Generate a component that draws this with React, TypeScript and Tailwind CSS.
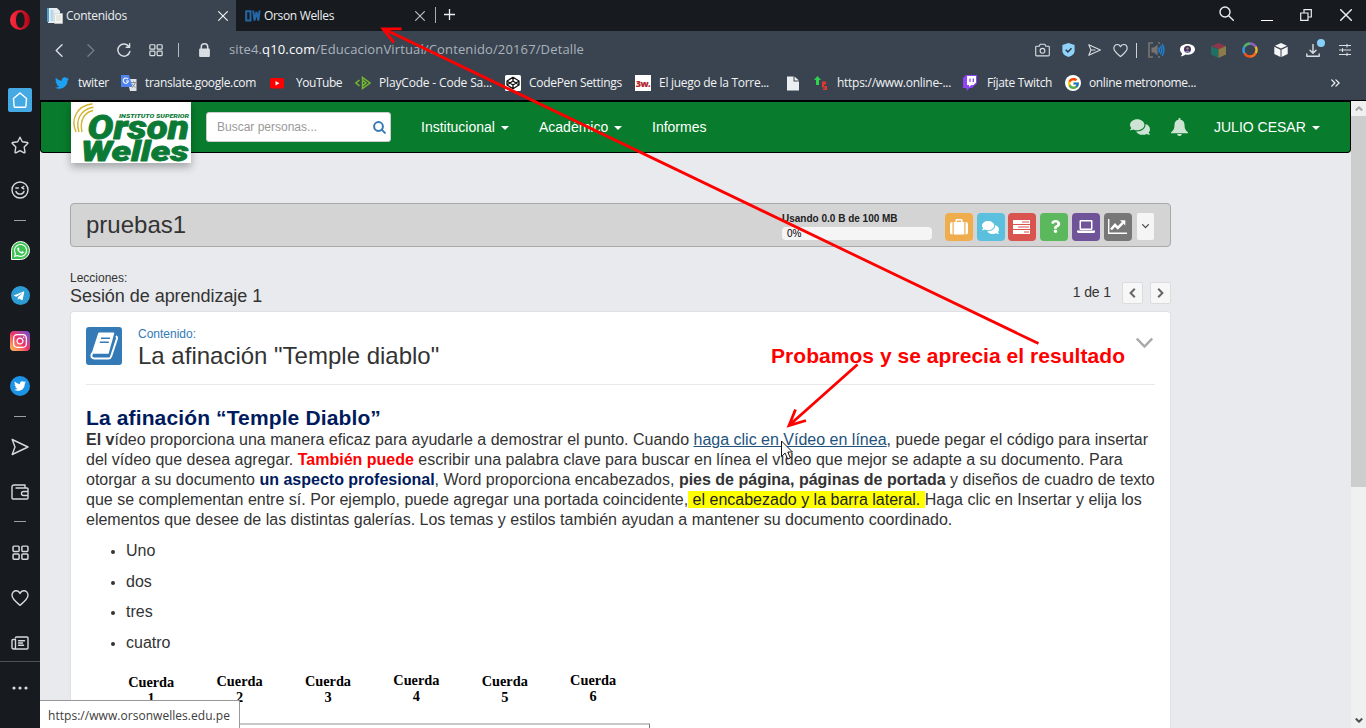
import type { ReactNode, SVGProps } from 'react';
import { FaComments, FaQuestion, FaTwitter, FaWhatsapp, FaInstagram, FaTelegramPlane } from 'react-icons/fa';
import { FcGoogle } from 'react-icons/fc';

const UI = "font-['Open_Sans','Noto_Sans',sans-serif]";

function Line(props: SVGProps<SVGSVGElement>) {
  return <svg fill="none" stroke="currentColor" strokeWidth={1.4} strokeLinecap="round" strokeLinejoin="round" {...props} />;
}

function Cell({ className, children }: { className: string; children?: ReactNode }) {
  return <div className={`flex shrink-0 items-center justify-center ${className}`}>{children}</div>;
}

const Dash = ({ className }: { className: string }) => (
  <Cell className={className}><span className="h-px w-3 bg-[#98a1a9]" /></Cell>
);

const SendIcon = ({ size }: { size: number }) => (
  <Line width={size} height={size} viewBox="0 0 18 18"><path d="M1.200 1.500 17 9 1.200 16.500 4 9Z" /></Line>
);
const HeartIcon = ({ size }: { size: number }) => (
  <Line width={size} height={size} viewBox="0 0 18 18"><path d="M9 16.300C5 13 1 10 1 6.300 1 3.600 2.900 1.800 5.100 1.800 6.900 1.800 8.200 2.800 9 4.400 9.800 2.800 11.100 1.800 12.900 1.800 15.100 1.800 17 3.600 17 6.300 17 10 13 13 9 16.300Z" /></Line>
);
const GridIcon = ({ size }: { size: number }) => (
  <Line width={size} height={size} viewBox="0 0 16 14"><rect x="1" y="1" width="5.700" height="5" rx=".8" /><rect x="9.300" y="1" width="5.700" height="5" rx=".8" /><rect x="1" y="8.300" width="5.700" height="5" rx=".8" /><rect x="9.300" y="8.300" width="5.700" height="5" rx=".8" /></Line>
);

function Sidebar() {
  return (
    <aside className="flex w-10 shrink-0 flex-col bg-[#171b1f] text-[#d5dade]">
      <Cell className="h-10">
        <svg width="20" height="20" viewBox="0 0 20 20">
          <defs><linearGradient id="op" x2="1"><stop offset="0" stopColor="#ff2b3f" /><stop offset="1" stopColor="#b00616" /></linearGradient></defs>
          <path fillRule="evenodd" fill="url(#op)" d="M10 0a10 10 0 1 0 0 20 10 10 0 0 0 0-20Zm.4 2.200c2.600 0 4.300 3.400 4.300 7.800s-1.700 7.800-4.300 7.800S6 14.400 6 10s1.800-7.800 4.400-7.800Z" />
        </svg>
      </Cell>
      <div className="h-[38px]" />
      <Cell className="h-11">
        <div className="flex size-6 items-center justify-center rounded-[2px] bg-[#45aae4] text-white">
          <Line width="16" height="16" viewBox="0 0 16 16"><path d="M1.500 6.500 8 1l6.500 5.500-.6 8a.8.8 0 0 1-.8.700H2.900a.8.8 0 0 1-.8-.700Z" /></Line>
        </div>
      </Cell>
      <Cell className="h-[45px]">
        <Line width="18" height="18" viewBox="0 0 18 18"><path d="m9 1.200 2.300 4.500 5 .8c.6.100.8.700.4 1.100l-3.500 3.500.8 5c.100.600-.4.900-.9.700L9 14.600l-4.100 2.200c-.5.200-1-.1-.9-.7l.8-5L1.300 7.600c-.4-.4-.2-1 .4-1.100l5-.8Z" /></Line>
      </Cell>
      <Cell className="h-[45px]">
        <Line width="18" height="18" viewBox="0 0 18 18"><circle cx="9" cy="9" r="8" /><path d="M5 10.500c1 3.500 7 3.500 8 0M4.800 7h2.500M12.800 5.500 10.800 6.700l2 1.200" /></Line>
      </Cell>
      <Dash className="h-4" />
      <Cell className="h-[45px]">
        <div className="flex size-[19px] items-center justify-center rounded-full rounded-bl-[3px] border border-white bg-[#3dc153] text-white"><FaWhatsapp size={15} /></div>
      </Cell>
      <Cell className="h-[45px]">
        <div className="flex size-[19px] items-center justify-center rounded-full bg-[#2d9bd4] pr-0.5 text-white"><FaTelegramPlane size={12} /></div>
      </Cell>
      <Cell className="h-[45px]">
        <div className="flex size-5 items-center justify-center rounded-[4px] bg-linear-to-tr from-[#ffc34a] via-[#ee2d68] to-[#6a3fd0] text-white"><FaInstagram size={16} /></div>
      </Cell>
      <Cell className="h-[45px]">
        <div className="flex size-5 items-center justify-center rounded-full bg-[#1d93e6] text-white"><FaTwitter size={12} /></div>
      </Cell>
      <Dash className="h-4" />
      <Cell className="h-[46px]"><SendIcon size={18} /></Cell>
      <Cell className="h-[43px]">
        <Line width="18" height="16" viewBox="0 0 18 16"><path d="M1 3c0-1.200.8-2 2-2h11v3M1 2.800V14a1 1 0 0 0 1 1H16a1 1 0 0 0 1-1V5a1 1 0 0 0-1-1H5M17 7.500h-4.500a2 2 0 0 0 0 4H17" /></Line>
      </Cell>
      <Dash className="h-[17px]" />
      <Cell className="h-[45px]"><GridIcon size={17} /></Cell>
      <Cell className="h-[45px]"><HeartIcon size={18} /></Cell>
      <Cell className="h-[41px] pt-1">
        <Line width="18" height="14" viewBox="0 0 18 14"><path d="M4.500 1.800c0-.5.300-.8.800-.8H16c.600 0 1 .4 1 1v10c0 .6-.4 1-1 1H2.500C1.600 13 1 12.400 1 11.500V4.500c0-.6.400-1 1-1h2.500v7.500c0 1.200-.7 2-1.800 2M7.500 4.700h6M7.500 7h4M7.500 9.300h5" /></Line>
      </Cell>
      <Cell className="h-[52px] border-t border-[#4a5055]">
        <svg width="16" height="4" fill="#d5dade"><circle cx="2" cy="2" r="1.600" /><circle cx="8" cy="2" r="1.600" /><circle cx="14" cy="2" r="1.600" /></svg>
      </Cell>
    </aside>
  );
}

function CloseX({ size = 9 }: { size?: number }) {
  return <Line width={size} height={size} viewBox="0 0 10 10" strokeWidth={1.2}><path d="m.6.6 8.800 8.800M9.400.6.6 9.400" /></Line>;
}

function TabStrip() {
  return (
    <div className="flex h-[31px] shrink-0 bg-[#171b1f] text-xs text-[#eceff1]">
      <div className="flex w-[196px] items-center bg-[#3a4450] pr-[8.500px] pl-[7px]">
        <svg width="16" height="16" viewBox="0 0 16 16"><path fill="#e7eef3" d="M1 0h9l3 3v12H1z" /><path fill="#4d9fd0" d="M0 0h2v14H0z" /><path fill="#b6d7e8" d="M3.500 2h3v11h-3z" /><path fill="#f7f4ec" stroke="#c8d2d8" strokeWidth=".6" d="M7.500 5.500h8v10h-8z" /><path stroke="#b9c6cd" strokeWidth=".6" d="M9 8h5M9 10h5M9 12h5" /></svg>
        <span className="ml-[3px] grow tracking-[-0.3px]">Contenidos</span>
        <CloseX size={10} />
      </div>
      <div className="flex w-[199px] items-center pr-[10px] pl-[9px]">
        <svg width="19" height="12" viewBox="0 0 19 12" className="mr-0" fill="none" stroke="#2567a5" strokeWidth="2"><path d="M1.200 1.200h4.300v9.300H1.200ZM8.200.5 9.500 10.500 11.500 2 13.300 10.500 14.600.5" /></svg>
        <span className="grow tracking-[-0.33px]">Orson Welles</span>
        <span className="text-[#b8bec4]"><CloseX size={10} /></span>
      </div>
      <div className="mt-[7px] h-4 w-px bg-[#a5adb5]" />
      <Cell className="mb-0.5 w-[27px]"><Line width="11" height="11" viewBox="0 0 11 11" strokeWidth={1.300}><path d="M5.500 0v11M0 5.500h11" /></Line></Cell>
      <div className="grow" />
      <Cell className="mr-px w-10 pb-1"><Line width="15" height="15" viewBox="0 0 15 15"><circle cx="6" cy="6" r="5" /><path d="m9.700 9.700 4.600 4.600" /></Line></Cell>
      <Cell className="w-[39px] pt-[9px]"><span className="h-px w-3 bg-white" /></Cell>
      <Cell className="w-10 pb-px"><Line width="12" height="12" viewBox="0 0 12 12" strokeLinejoin="miter" strokeWidth={1.2}><path d="M.7 4h7.300v7.300H.7ZM4 4V.7h7.300V8H8" /></Line></Cell>
      <Cell className="w-10 pb-px"><CloseX size={12} /></Cell>
    </div>
  );
}

function AddressBar() {
  return (
    <div className="flex h-[37px] shrink-0 items-center bg-[#3a4450] pt-px pr-[5px] pl-[3px] text-[#d9dee2]">
      <Cell className="w-8"><Line width="8" height="13" viewBox="0 0 8 13"><path d="M7 .8 1.200 6.500 7 12.200" /></Line></Cell>
      <Cell className="w-8 text-[#727c86]"><Line width="8" height="13" viewBox="0 0 8 13"><path d="m1 .8 5.800 5.700L1 12.200" /></Line></Cell>
      <Cell className="w-[33px]"><Line width="14" height="14" viewBox="0 0 14 14"><path d="M12.900 8.500A6.100 6.100 0 1 1 12 3.600M12.600.8v3.400H9.200" /></Line></Cell>
      <Cell className="w-8"><GridIcon size={14} /></Cell>
      <Cell className="w-[13px]"><span className="h-[14px] w-px bg-[#b4bbc1]" /></Cell>
      <Cell className="w-[38px]"><svg width="11" height="14" viewBox="0 0 10 13"><rect y="5" width="10" height="8" rx="1" fill="#d9dee2" /><path d="M2 5.500V3.700a3 3 0 0 1 6 0v1.800" fill="none" stroke="#d9dee2" strokeWidth="1.400" /></svg></Cell>
      <div className="grow pl-[6px] text-[13px] tracking-[0.138px] text-[#a9b3bd]">
        site4.<span className="text-white">q10.com</span>/EducacionVirtual/Contenido/20167/Detalle
      </div>
      <Cell className="w-[26px]"><Line width="15" height="14" viewBox="0 0 15 14" strokeWidth={1.1}><path d="M1.500 3.200h2.700l1-2h4.600l1 2h2.700c.4 0 .8.400.8.800v8c0 .5-.4.900-.9.900H1.600a.9.900 0 0 1-.9-.9V4c0-.4.400-.8.800-.8Z" /><circle cx="7.500" cy="7.800" r="2.400" /></Line></Cell>
      <Cell className="w-[26px]"><svg width="13" height="14" viewBox="0 0 13 14"><path fill="#8fd3fb" d="M6.500 0 12.600 2v6c0 3-3 5-6.100 6C3.400 13 .4 11 .4 8V2Z" /><path d="m3.700 6.700 2.200 2.200 3.600-3.700" fill="none" stroke="#2c3946" strokeWidth="1.500" /></svg></Cell>
      <Cell className="w-[26px]"><Line width="13" height="12" viewBox="0 0 13 12" strokeWidth={1.100}><path d="M.8.800 12.400 6 .8 11.200 3 6Zm2.200 5.200h4" /></Line></Cell>
      <Cell className="w-[26px]"><HeartIcon size={15} /></Cell>
      <Cell className="w-2 pr-px"><span className="h-[15px] w-px bg-[#cfd4d8]" /></Cell>
      <Cell className="w-[31px]"><svg width="17" height="16" viewBox="0 0 17 16" fill="none"><path d="M5 1H1v14h4M10 1h2M10 15h2" stroke="#77736f" strokeWidth="1.700" /><path d="M3.500 5.500H6L9.500 2.500v11L6 10.500H3.500z" fill="#77736f" /><path d="M10.500 5.500c1 1.500 1 3.500 0 5M12.300 4c1.700 2.500 1.700 5.500 0 8M14 2c2.400 3.800 2.400 8.200 0 12" stroke="#1e7fd6" strokeWidth="1.500" /></svg></Cell>
      <Cell className="w-[31px]"><svg width="15" height="13" viewBox="0 0 15 13"><path fill="#fff" d="M7.500 0C12 0 15 2.300 15 5.300s-3 5.400-7 5.400c-1 0-1.700 0-2.500-.3C4 11.500 2.500 12.300.700 12.300c1-.8 1.500-2 1.300-3C.7 8.300 0 7 0 5.300 0 2.300 3 0 7.500 0Z" /><circle cx="7.500" cy="5.300" r="3.500" fill="#3d3356" /><circle cx="7.500" cy="4.500" r="1.300" fill="#a97f86" /><path d="M5 8.300c.5-2 4.500-2 5 0z" fill="#8f8ad0" /></svg></Cell>
      <Cell className="w-[31px]"><svg width="15" height="15" viewBox="0 0 15 15"><path fill="#8b3649" d="M7.500 0 15 3 7.500 6.300 0 3Z" /><path fill="#1f6f63" d="M0 3v8.500L7.500 15V6.300Z" /><path fill="#8c7b49" d="M15 3v8.500L7.500 15V6.300Z" /></svg></Cell>
      <Cell className="w-[31px]"><svg width="16" height="16" viewBox="0 0 16 16" fill="none" strokeWidth="2.400"><path d="M8 1.500A6.500 6.500 0 0 1 13.600 4.700" stroke="#8b62c4" /><path d="M13.600 4.700A6.500 6.500 0 0 1 13.600 11.200" stroke="#f0b429" /><path d="M13.600 11.200A6.500 6.500 0 0 1 8 14.500" stroke="#ff6a1a" /><path d="M8 14.500A6.500 6.500 0 0 1 2.400 11.200" stroke="#f4511e" /><path d="M2.400 11.200A6.500 6.500 0 0 1 2.400 4.700" stroke="#3598e0" /><path d="M2.400 4.700A6.500 6.500 0 0 1 8 1.500" stroke="#58b368" /></svg></Cell>
      <Cell className="w-[31px]"><svg width="14" height="14" viewBox="0 0 14 14"><path fill="#f5f6f7" d="M7 0 13 2.700 7 5.500 1 2.700ZM.3 3.800l6.200 2.900V14L.3 11ZM13.700 3.800 7.500 6.700V14l6.200-3Z" /></svg></Cell>
      <Cell className="relative w-[33px]">
        <Line width="14" height="13" viewBox="0 0 14 13"><path d="M7 .5V9M4 6.300 7 9.200l3-2.900M.8 10v2.300h12.400V10" /></Line>
        <span className="absolute top-[-5px] right-[4px] size-2 rounded-full bg-[#85cffb]" />
      </Cell>
      <Cell className="w-8"><Line width="12" height="12" viewBox="0 0 12 12" strokeWidth={1.1}><path d="M0 1.500h12M0 6h12M0 10.500h12M8 0v3M3.500 4.500v3M8 9v3" /></Line></Cell>
    </div>
  );
}

function Bookmark({ className, icon, children, iconClass = 'w-6' }: { className: string; icon: ReactNode; children?: ReactNode; iconClass?: string }) {
  return (
    <div className={`flex shrink-0 items-center whitespace-nowrap ${className}`}>
      <span className={`flex shrink-0 ${iconClass}`}>{icon}</span>
      <span>{children}</span>
    </div>
  );
}

function BookmarksBar() {
  return (
    <div className="flex h-8 shrink-0 items-center bg-[#3a4450] pb-0.5 pl-[14px] text-xs text-[#f1f3f4]">
      <Bookmark className="w-[67px] tracking-[-0.25px]" icon={<FaTwitter size={14} color="#1da1f2" className="ml-px" />}>twiter</Bookmark>
      <Bookmark className="w-[148px] tracking-[-0.31px]" icon={<svg width="16" height="16" viewBox="0 0 16 16"><path fill="#dfe3e6" d="M6 4h9.500v12H9z" /><path fill="#4f84ec" d="M0 0h8l3.500 12H0z" /><path d="M7 4.200A2.600 2.600 0 1 0 7.400 6H5" fill="none" stroke="#fff" strokeWidth="1.100" /><path d="M10 7.500h5M12.500 6.500v1M14 8c-.5 2-1.500 3.500-3 4.500M11.500 9c.5 1.500 1.500 2.500 3 3.500" stroke="#737b86" strokeWidth=".8" fill="none" /></svg>}>translate.google.com</Bookmark>
      <Bookmark className="w-[86px] tracking-[-0.47px]" iconClass="w-[27px]" icon={<svg width="16" height="11" viewBox="0 0 16 11"><rect x="1" width="14" height="10.500" rx="1.500" fill="#f00" /><path fill="#fff" d="m6.500 3 4 2.300-4 2.300z" /></svg>}>YouTube</Bookmark>
      <Bookmark className="w-[150px] tracking-[-0.17px]" icon={<svg width="16" height="14" viewBox="0 0 16 14" fill="none" stroke="#74b82e" strokeWidth="1.500"><path d="M4.500 4 1 7l3.500 3M7.500 5v7.500L15 7 7.500 1.500V4L11 7 8 9.500" /></svg>}>PlayCode - Code Sa...</Bookmark>
      <Bookmark className="w-[130px] tracking-[-0.3px]" icon={<svg width="16" height="16" viewBox="0 0 16 16" fill="none" stroke="#111" strokeWidth="1.300" strokeLinejoin="round"><rect width="16" height="16" rx="1.500" fill="#fff" stroke="none" /><path d="m8 2.300 6 3.700v4l-6 3.700L2 10V6Zm0 0V6M8 10v3.700M2 6l6 4 6-4M2 10l6-4 6 4" /></svg>}>CodePen Settings</Bookmark>
      <Bookmark className="w-[150px] tracking-[-0.29px]" icon={<span className="flex size-4 items-center justify-center bg-white font-['Open_Sans',sans-serif] text-[9px] leading-none font-extrabold tracking-[-0.6px] text-[#b3242b]">3w.</span>}>El juego de la Torre...</Bookmark>
      <Bookmark className="w-7" icon={<svg width="16" height="15" viewBox="0 0 16 15" fill="#eceff1"><path d="M2 .5h6.500v5H14V14.500H2Z" /><path d="M9.500.5 14 4.500H9.500Z" /></svg>} />
      <Bookmark className="w-[150px] tracking-[-0.27px]" icon={<svg width="16" height="16" viewBox="0 0 16 16"><path fill="#2fd34d" d="M4.500 1 8 5H6v5H3V5H1Z" /><path fill="#e2392f" d="M9 6.500h4v3h-2v1.500h3v4h-4v-1.500h2V12.500H9z" /></svg>}>https://www.online-...</Bookmark>
      <Bookmark className="w-[102px] tracking-[-0.33px]" icon={<svg width="16" height="16" viewBox="0 0 16 16"><path fill="#8f45f5" d="M3 0 0 3v10h3.500v3l3-3H9l5-5V0Z" /><path fill="#fff" d="M4 1h9v6.500L10.500 10H8.300L6 12v-2H4Z" /><path stroke="#8f45f5" strokeWidth="1.300" d="M7 3.500V7M10.300 3.500V7" /></svg>}>Fíjate Twitch</Bookmark>
      <Bookmark className="tracking-[-0.37px]" icon={<span className="flex size-4 items-center justify-center rounded-full bg-white"><FcGoogle size={13} /></span>}>online metronome...</Bookmark>
      <div className="grow" />
      <Cell className="mr-[26px]"><Line width="9" height="8" viewBox="0 0 9 8" strokeWidth={1.200}><path d="m.7.800 3.200 3.200L.7 7.200M4.900.800l3.200 3.200-3.200 3.200" /></Line></Cell>
    </div>
  );
}

const Caret = ({ className = '' }: { className?: string }) => (
  <span className={`mt-0.5 h-0 w-0 border-x-4 border-t-4 border-x-transparent border-t-white ${className}`} />
);

function Logo() {
  return (
    <svg width="120" height="61" viewBox="0 0 120 61" className="block">
      <g fill="none" stroke="#d3b32e" strokeWidth="1.400">
        <path d="M21.500 1.800C5 4 -.5 18 5 30" /><path d="M22.500 5.200C10 7 4 18 8 30" /><path d="M22 8.500C13 10.500 8.500 19 11 30" />
      </g>
      <g fill="#0b7a35" stroke="#0b7a35" fontFamily="Roboto, sans-serif" fontWeight="900" fontStyle="italic" strokeLinejoin="round">
        <text x="48" y="15.500" fontSize="6" strokeWidth="0" textLength="70" lengthAdjust="spacingAndGlyphs">INSTITUTO SUPERIOR</text>
        <text x="16.500" y="37" fontSize="34" strokeWidth=".8" textLength="101.500" lengthAdjust="spacingAndGlyphs">Orson</text>
        <text x="10" y="59.300" fontSize="28" strokeWidth=".8" textLength="107.500" lengthAdjust="spacingAndGlyphs">Welles</text>
      </g>
    </svg>
  );
}

function Navbar() {
  return (
    <nav className="flex h-[53px] shrink-0 rounded-b-[4px] border border-t-2 border-black bg-[#087c2c] pr-[30px] pl-[30px] text-sm text-white">
      <div className="h-[61px] w-[120px] shrink-0 bg-white shadow-[0_4px_8px_rgba(0,0,0,0.3)]"><Logo /></div>
      <div className="mt-[10px] ml-[15px] flex h-[30px] w-[185px] items-center rounded-[3px] border border-[#ccc] bg-white pr-[4px] pl-[10px] text-xs text-[#999]">
        <span className="grow">Buscar personas...</span>
        <Line width="13" height="13" viewBox="0 0 13 13" strokeWidth={2} className="text-[#337ab7]"><circle cx="5.500" cy="5.500" r="4.400" /><path d="m8.900 8.900 3 3" /></Line>
      </div>
      <div className="flex h-[50px] grow items-center pl-[30px]">
        <span className="w-[80px]">Institucional</span><Caret className="mr-[30px]" />
        <span className="w-[75px]">Académico</span><Caret className="mr-[30px]" />
        <span>Informes</span>
        <div className="grow" />
        <FaComments size={20} className="mr-[21px] opacity-80" />
        <svg width="17" height="18" viewBox="0 0 17 18" fill="#fff" className="mr-[26px] opacity-80"><path d="M8.500 0c.6 0 1 .4 1 1v.8c2.700.4 4 2.600 4 5 0 4 1.200 6 3.500 7.700v.8H0v-.8C2.300 12.800 3.500 10.800 3.500 6.800c0-2.400 1.300-4.600 4-5V1c0-.6.400-1 1-1ZM6.200 16h4.600c0 1.100-1 2-2.300 2s-2.300-.9-2.300-2Z" /></svg>
        <span className="w-[98px]">JULIO CESAR</span><Caret />
      </div>
    </nav>
  );
}

function Tool({ className, children }: { className: string; children: ReactNode }) {
  return <div className={`flex size-7 shrink-0 items-center justify-center rounded-[4px] text-white ${className}`}>{children}</div>;
}

function CourseBar() {
  return (
    <div className="mt-[50px] flex h-11 w-[1101px] shrink-0 items-center rounded-[4px] border border-[#a9a9a9] bg-[#d4d4d4] pl-[15px]">
      <h1 className="w-[696px] text-2xl text-[#333]">pruebas1</h1>
      <div className="w-[163px] pt-px text-[10px] leading-[14px] text-[#222]">
        <div className="font-bold">Usando 0.0 B de 100 MB</div>
        <div className="mt-px h-[13px] w-[150px] rounded-[4px] bg-[#f5f5f5] pl-[5px] leading-[13px] text-black">0%</div>
      </div>
      <div className="flex gap-[3.800px] pt-[3px]">
        <Tool className="bg-[#f0ad4e]"><svg width="18" height="16" viewBox="0 0 18 16" fill="#fff"><path d="M2.500 3v12.500H2a2 2 0 0 1-2-2V5a2 2 0 0 1 2-2ZM15.500 3v12.500h.5a2 2 0 0 0 2-2V5a2 2 0 0 0-2-2ZM3.700 3h1.800V1.200C5.500.5 6 0 6.700 0h4.600c.7 0 1.200.5 1.200 1.200V3h1.800v12.500H3.700Zm3.300 0h4V1.500H7Z" /></svg></Tool>
        <Tool className="bg-[#5bc0de]"><FaComments size={17} className="mt-0.5" /></Tool>
        <Tool className="-ml-[0.800px] mr-[0.800px] bg-[#d9534f]"><svg width="17" height="14" viewBox="0 0 17 14"><path fill="#fff" d="M0 0h17v4H0zM0 5h17v4H0zM0 10h17v4H0z" /><path stroke="#d9534f" d="M9 2h7M5 7h11M11 12h5" /></svg></Tool>
        <Tool className="bg-[#5cb85c]"><FaQuestion size={13} className="ml-0.5" /></Tool>
        <Tool className="bg-[#6f5499]"><svg width="18" height="13" viewBox="0 0 18 13" fill="#fff"><path fillRule="evenodd" d="M2.500 1.200C2.500.5 3 0 3.700 0h10.600c.7 0 1.200.5 1.200 1.200v7.600c0 .7-.5 1.200-1.200 1.200H3.700c-.7 0-1.200-.5-1.200-1.200ZM4 1.500v7h10v-7ZM0 10.500h18v1.200c0 .7-.7 1.300-1.500 1.300h-15C.7 13 0 12.500 0 11.800Z" /></svg></Tool>
        <Tool className="bg-[#777]"><svg width="19" height="15" viewBox="0 0 19 15"><path d="M.7 0v14.200H19" fill="none" stroke="#fff" strokeWidth="1.400" /><path d="m3 10.500 4-4.500 2.800 2.800 5-5" fill="none" stroke="#fff" strokeWidth="2.600" /><path fill="#fff" d="M12 1.200H17.300v5.300z" /></svg></Tool>
        <div className="ml-[1px] flex h-[27px] w-[17px] items-center justify-center rounded-[2px] bg-[#f5f5f5] text-[#444]"><Line width="7" height="5" viewBox="0 0 7 5" strokeWidth={1.200}><path d="m.6.700 2.900 3L6.400.700" /></Line></div>
      </div>
    </div>
  );
}

function PagerButton({ d }: { d: string }) {
  return (
    <div className="flex h-[22px] w-[21px] items-center justify-center rounded-[2px] border border-[#dcdcdc] bg-[#f7f7f7] text-[#666]">
      <Line width="7" height="10" viewBox="0 0 7 10" strokeWidth={2} strokeLinecap="butt" strokeLinejoin="miter"><path d={d} /></Line>
    </div>
  );
}

function LessonHeader() {
  return (
    <div className="mt-[23px] flex h-[41px] w-[1101px] shrink-0 text-[#333]">
      <div className="grow">
        <div className="text-xs leading-4">Lecciones:</div>
        <div className="text-[18px] leading-5 tracking-[-0.040px]">Sesión de aprendizaje 1</div>
      </div>
      <span className="mt-[12px] mr-[11px] text-sm leading-5 tracking-[-0.1px]">1 de 1</span>
      <div className="mt-[12px] flex gap-[7px]"><PagerButton d="M5.800 .8 1.600 5l4.200 4.200" /><PagerButton d="M1.200.800 5.400 5 1.200 9.200" /></div>
    </div>
  );
}

const strings = [
  { n: 1, pad: 'pt-[2px]' }, { n: 2, pad: 'pt-px' }, { n: 3, pad: 'pt-px' },
  { n: 4, pad: 'pt-0' }, { n: 5, pad: 'pt-px' }, { n: 6, pad: 'pt-0' },
];

function ContentCard() {
  return (
    <section className="flex w-[1101px] grow flex-col rounded-t-[4px] border border-b-0 border-[#dfe0e3] bg-white px-[15px] text-base leading-5 text-[#333]">
      <header className="flex h-[73px] shrink-0 border-b border-[#e8e8e8] pt-[15px]">
        <div className="flex h-[38px] w-9 items-center justify-center rounded-[3px] bg-[#337ab7]">
          <svg width="30" height="28" viewBox="0 0 30 28" fill="none" stroke="#fff" strokeLinejoin="round">
            <path d="M10 1.200h14.500L19 21H3.500Z" fill="#fff" stroke="#fff" strokeWidth="1.500" />
            <path d="M3.200 21c-1.800 3.300-.6 5.500 2 5.500h14.300c1.500 0 2.200-.8 2.600-2L28 6.500c.3-1-.2-1.800-1.200-2.300" strokeWidth="2" />
            <path d="M12 6.300h9M10.800 10.300h9" stroke="#337ab7" strokeWidth="1.600" />
          </svg>
        </div>
        <div className="ml-4 grow">
          <div className="text-xs leading-[14px] text-[#337ab7]">Contenido:</div>
          <h2 className="text-2xl leading-[30px]">La afinación "Temple diablo"</h2>
        </div>
        <div className="mt-[17px] mr-[31px] text-[21px] leading-6 font-bold tracking-[0.044px] text-[#f00]">Probamos y se aprecia el resultado</div>
        <Line className="mt-[10px] mr-[2px] -ml-[20px] text-[#a9a9a9]" width="17" height="12" viewBox="0 0 17 12" strokeWidth={2.4} strokeLinecap="butt" strokeLinejoin="miter"><path d="m.8 1.500 7.700 8 7.700-8" /></Line>
      </header>
      <h3 className="mt-[20px] text-[21px] leading-[25px] font-bold tracking-[0.130px] text-[#001a5e]">La afinación “Temple Diablo”</h3>
      <p className="whitespace-nowrap">
        <b>El v</b>ídeo proporciona una manera eficaz para ayudarle a demostrar el punto. Cuando <a className="text-[#23527c] underline">haga clic en Vídeo en línea</a>, puede pegar el código para insertar<br />
        del vídeo que desea agregar. <b className="text-[#f00]">También puede</b> escribir una palabra clave para buscar en línea el vídeo que mejor se adapte a su documento. Para<br />
        otorgar a su documento <b className="text-[#001a5e]">un aspecto profesional</b>, Word proporciona encabezados, <b>pies de página, páginas de portada</b> y diseños de cuadro de texto<br />
        que se complementan entre sí. Por ejemplo, puede agregar una portada coincidente,<mark className="bg-[#ff0] text-[#222]"> el encabezado y la barra lateral. </mark>Haga clic en Insertar y elija los<br />
        elementos que desee de las distintas galerías. Los temas y estilos también ayudan a mantener su documento coordinado.
      </p>
      <ul className="mt-[11px] flex flex-col gap-[10.700px] pl-[25px]">
        {['Uno', 'dos', 'tres', 'cuatro'].map((t) => (
          <li key={t} className="flex items-center"><span className="mt-0.5 mr-[11px] size-1 rounded-full bg-[#333]" />{t}</li>
        ))}
      </ul>
      <div className="mt-[20px] flex pl-[21px] font-['Liberation_Serif',serif] text-[14.300px] leading-[15.500px] font-bold text-black">
        {strings.map((s) => (
          <div key={s.n} className={`w-[88.400px] text-center ${s.pad}`}>Cuerda<br />{s.n}</div>
        ))}
      </div>
      <div className="mt-auto h-[5px] w-[564px] shrink-0 border-t-2 border-r border-[#c8c8c8] border-r-[#777]" />
    </section>
  );
}

function Scrollbar() {
  return (
    <div className="flex w-[15px] shrink-0 flex-col border-t border-black bg-[#f0f0f0] text-[#505050]">
      <Cell className="h-[15px] text-[#a8a8a8]"><Line width="8" height="5" viewBox="0 0 8 5" strokeWidth={2} strokeLinecap="butt"><path d="m.8 4.500 3.200-3.200 3.200 3.200" /></Line></Cell>
      <div className="h-[371px] bg-[#cdcdcd]" />
      <div className="grow" />
      <Cell className="h-[15px]"><Line width="8" height="5" viewBox="0 0 8 5" strokeWidth={2} strokeLinecap="butt"><path d="m.8.500 3.200 3.200L7.200.500" /></Line></Cell>
    </div>
  );
}

export default function App() {
  return (
    <div className="relative flex h-[728px] w-[1366px] overflow-hidden">
      <Sidebar />
      <div className="flex min-w-0 grow flex-col">
        <div className={UI}><TabStrip /><AddressBar /><BookmarksBar /></div>
        <div className="flex min-h-0 grow bg-[#e8eaed] font-['Liberation_Sans',Arial,sans-serif]">
          <main className="flex min-w-0 grow flex-col">
            <Navbar />
            <div className="flex min-h-0 grow flex-col pl-[30px]">
              <CourseBar />
              <LessonHeader />
              <ContentCard />
            </div>
          </main>
          <Scrollbar />
        </div>
      </div>
      <div className={`absolute bottom-0 left-10 flex h-7 w-[200px] items-center rounded-tr-[2px] border-t border-r border-[#999] bg-white pt-0.5 pl-[8px] text-xs tracking-[0.04px] text-[#3c3c3c] ${UI}`}>https://www.orsonwelles.edu.pe</div>
      <svg className="pointer-events-none absolute inset-0" width="1366" height="728" fill="none" stroke="#f00" strokeWidth="2.800">
        <path d="M1038.500 343.500 383.500 28.800M401.500 28.800H383L394 42.500" />
        <path d="M857.500 364.500 789.500 425M795.500 409.500 789 425.500 806 420.500" />
        <path d="M781.500 441v15.500l3.600-3.400 2.600 6 2.700-1.200-2.600-5.900h4.700Z" fill="#fff" stroke="#111" strokeWidth="1" />
      </svg>
    </div>
  );
}
